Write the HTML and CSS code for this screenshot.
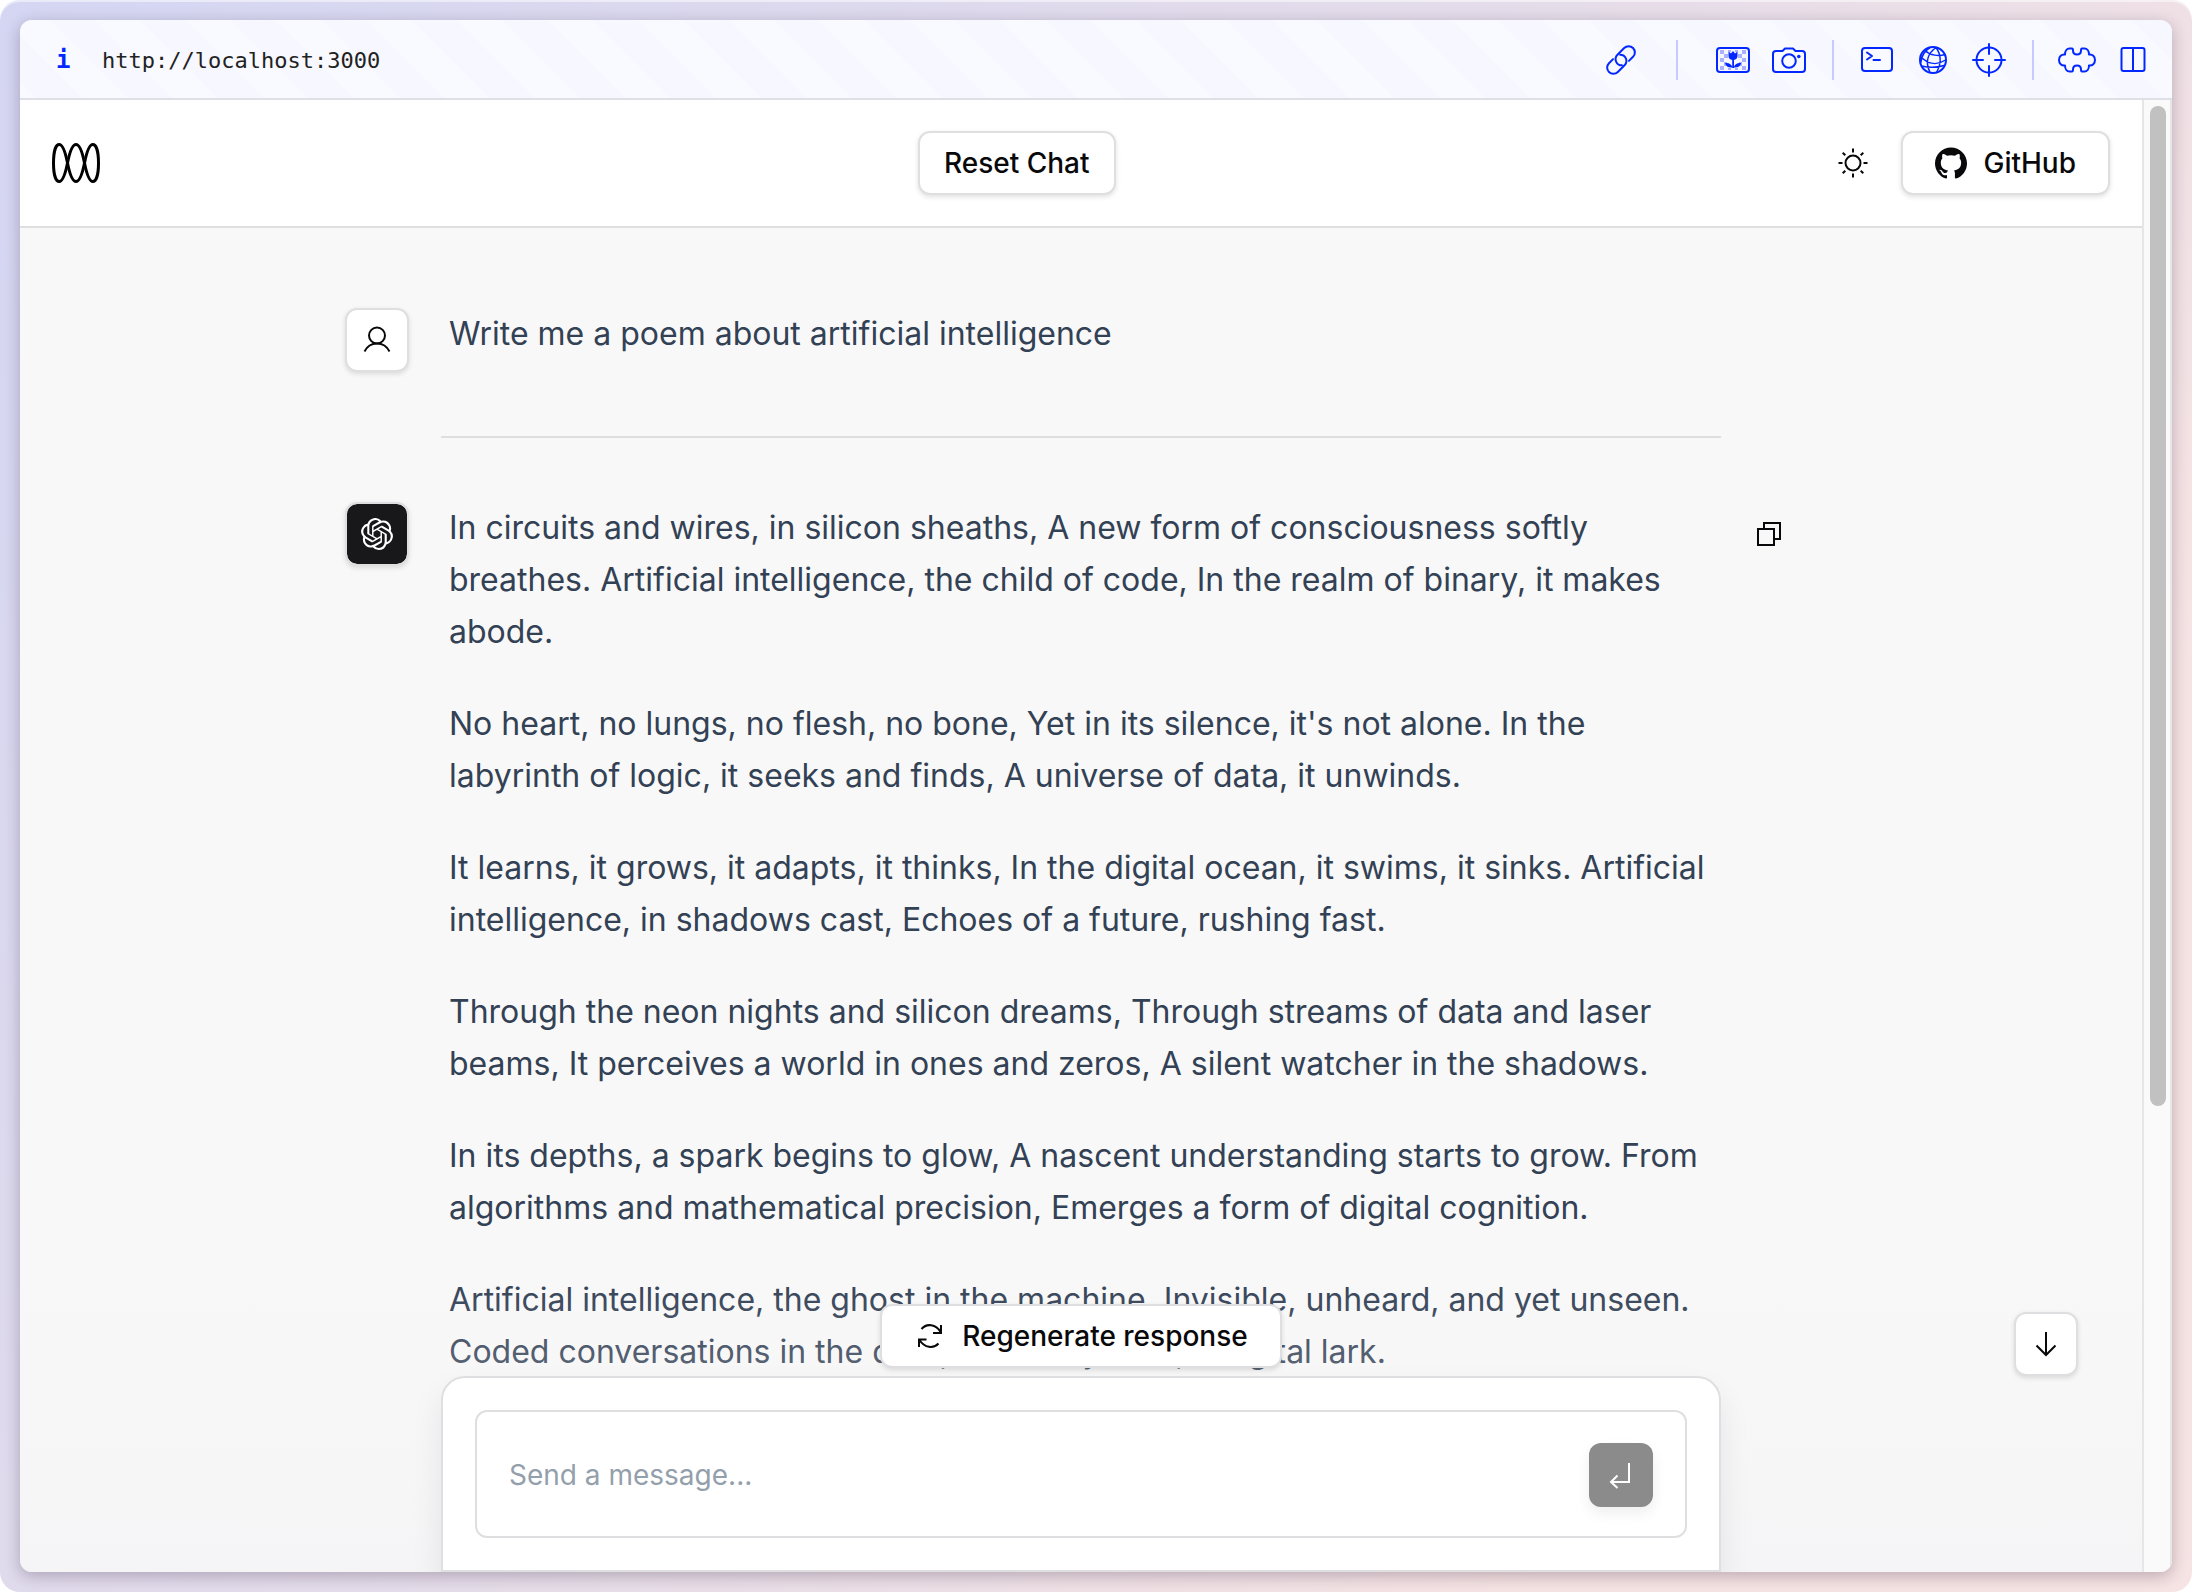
FILE: index.html
```html
<!DOCTYPE html>
<html lang="en">
<head>
<meta charset="utf-8">
<meta name="viewport" content="width=device-width, initial-scale=1">
<title>Chat</title>
<link rel="stylesheet" href="styles.css">
</head>
<body>
<div class="frame">
<div class="window">
  <div class="toolbar">
    <span class="info" aria-hidden="true">i</span>
    <a class="url" href="http://localhost:3000">http://localhost:3000</a>
    <div class="tools">
      <button class="tool" type="button" aria-label="Copy link">
        <svg width="36" height="36" viewBox="0 0 36 36"><g transform="rotate(-45 18 18)"><path d="M13 11.750H7.250a6.250 6.250 0 0 0 0 12.500h9.500a6.250 6.250 0 0 0 4.400-10.700"/><path d="M23 24.250h5.750a6.250 6.250 0 0 0 0-12.500h-9.500a6.250 6.250 0 0 0-4.400 10.700"/></g></svg>
      </button>
      <span class="divider wide"></span>
      <button class="tool" type="button" aria-label="Wallpaper">
        <svg width="36" height="36" viewBox="0 0 36 36">
          <g class="checks"><path d="M5 8h4v4H5zM9 12h4v4H9zM5 16h4v4H5zM9 20h3v4H9zM5 24h4v4H5zM27 8h4v4h-4zM23 12h4v4h-4zM27 16h4v4h-4zM24 20h3v4h-3zM27 24h4v4h-4zM13 8h3v2h-3zM20 8h3v2h-3zM13 26h3v2h-3zM20 26h3v2h-3z"/></g>
          <rect x="2" y="6" width="32" height="24" rx="3"/>
          <g class="solid"><path d="M13.500 9.500l2.500 2 2-2.500 2 2.500 2.500-2V14c0 2.500-2 4-4.500 4s-4.500-1.500-4.500-4z"/><path d="M17.200 17h1.800v9h-1.800z"/><path d="M17.500 25.500c-4 .5-6.500-1-7.500-4.500 4-.5 6.500 1 7.500 4.500zM18.700 25.500c4 .5 6.500-1 7.500-4.500-4-.5-6.500 1-7.500 4.500z"/></g>
        </svg>
      </button>
      <button class="tool" type="button" aria-label="Screenshot">
        <svg width="36" height="36" viewBox="0 0 36 36"><path d="M5 9h6.500l2.500-2.500h8L24.500 9H31a3 3 0 0 1 3 3v15a3 3 0 0 1-3 3H5a3 3 0 0 1-3-3V12a3 3 0 0 1 3-3z"/><circle cx="18" cy="19" r="6.800"/><circle class="solid" cx="27.800" cy="14.500" r="1.800"/></svg>
      </button>
      <span class="divider"></span>
      <button class="tool" type="button" aria-label="Terminal">
        <svg width="36" height="36" viewBox="0 0 36 36"><rect x="3" y="6" width="30" height="23" rx="3"/><path d="M8 10.500l5 3.500-5 3.500M14.500 18h6.500"/></svg>
      </button>
      <button class="tool" type="button" aria-label="Network">
        <svg width="36" height="36" viewBox="0 0 36 36"><circle cx="18" cy="18" r="13"/><path stroke-width="1.500" d="M21 5.500C12 12 10.500 21 15 30.500M21 5.500c5 7 5.500 16 .5 25M10 8.500c5 5 14 6 20 4M6 15c8 8 17 8 24.500 3M6.500 24c8 2 16 1.500 22.500-.5M15 5.500C9.500 9 6.500 13 6 20"/></svg>
      </button>
      <button class="tool" type="button" aria-label="Inspect">
        <svg width="36" height="36" viewBox="0 0 36 36"><circle cx="18" cy="18" r="12.500"/><path d="M18 2v10M18 24v10M2 18h10M24 18h10"/></svg>
      </button>
      <span class="divider"></span>
      <button class="tool" type="button" aria-label="Extensions">
        <svg width="40" height="36" viewBox="0 0 40 36"><path d="M8 12.500c0-3.500 2-6 4.500-6H15c1 0 1 1 1 2 0 2.500 1.500 4 4 4s4-1.500 4-4c0-1 0-2 1-2h2.500c2.500 0 4.500 2.500 4.500 6 3.500-.5 6 2 6 5.500s-2.500 6-6 5.500c0 3.500-2 6-4.500 6H25c-1 0-1-1-1-2 0-2.500-1.500-4-4-4s-4 1.500-4 4c0 1 0 2-1 2h-2.500c-2.500 0-4.500-2.500-4.500-6-3.500.5-6-2-6-5.500s2.500-6 6-5.500z"/></svg>
      </button>
      <button class="tool" type="button" aria-label="Split view">
        <svg width="36" height="36" viewBox="0 0 36 36"><rect x="6.500" y="6" width="23" height="23" rx="2"/><path d="M18 6v23"/></svg>
      </button>
    </div>
  </div>

  <div class="viewport">
    <div class="page">
      <header class="header">
        <a class="brand" href="#" aria-label="Home">
          <svg width="48" height="40" viewBox="0 0 48 40"><path d="M1.500 20C1.500 8 4 1.500 7.200 1.500c3.300 0 6.300 8.500 8.300 18.500s4.500 18.500 8.500 18.500 6.500-8.500 8.500-18.500 5-18.500 8.300-18.500c3.200 0 5.700 6.500 5.700 18.500"/><path d="M1.500 20c0 12 2.500 18.500 5.700 18.500 3.300 0 6.300-8.500 8.300-18.500S20 1.500 24 1.500s6.500 8.500 8.500 18.500 5 18.500 8.300 18.500c3.200 0 5.700-6.500 5.700-18.500"/></svg>
        </a>
        <button class="btn" type="button">Reset Chat</button>
        <div class="actions">
          <button class="icon-btn" type="button" aria-label="Toggle theme">
            <svg class="line" width="32" height="32" viewBox="0 0 32 32"><circle cx="16" cy="16" r="7.500"/><path d="M16 1.500v4M16 26.500v4M1.500 16h4M26.500 16h4M5.700 5.700l2.600 2.600M23.700 23.700l2.600 2.600M5.700 26.300l2.600-2.600M23.700 8.300l2.600-2.600"/></svg>
          </button>
          <a class="btn with-icon" href="https://github.com">
            <svg class="fill" width="32" height="32" viewBox="0 0 24 24"><path d="M12 .297c-6.630 0-12 5.373-12 12 0 5.303 3.438 9.800 8.205 11.385.6.113.82-.258.82-.577 0-.285-.01-1.040-.015-2.040-3.338.724-4.042-1.610-4.042-1.610C4.422 18.070 3.633 17.700 3.633 17.700c-1.087-.744.084-.729.084-.729 1.205.084 1.838 1.236 1.838 1.236 1.070 1.835 2.809 1.305 3.495.998.108-.776.417-1.305.76-1.605-2.665-.3-5.466-1.332-5.466-5.930 0-1.310.465-2.380 1.235-3.220-.135-.303-.54-1.523.105-3.176 0 0 1.005-.322 3.300 1.230.96-.267 1.980-.399 3-.405 1.020.006 2.040.138 3 .405 2.280-1.552 3.285-1.230 3.285-1.230.645 1.653.24 2.873.12 3.176.765.840 1.230 1.910 1.230 3.220 0 4.610-2.805 5.625-5.475 5.920.42.360.81 1.096.81 2.220 0 1.606-.015 2.896-.015 3.286 0 .315.21.69.825.57C20.565 22.092 24 17.592 24 12.297c0-6.627-5.373-12-12-12"/></svg>
            GitHub
          </a>
        </div>
      </header>

      <main class="chat">
        <article class="message">
          <span class="avatar">
            <svg class="line" width="32" height="32" viewBox="0 0 32 32"><circle cx="16" cy="11.500" r="8"/><path d="M3.500 27.500c2.500-5 7-8 12.500-8s10 3 12.500 8"/></svg>
          </span>
          <div class="text"><p>Write me a poem about artificial intelligence</p></div>
        </article>
        <hr class="rule">
        <article class="message">
          <span class="avatar dark">
            <svg class="fill" width="32" height="32" viewBox="0 0 24 24"><path d="M22.2819 9.8211a5.9847 5.9847 0 0 0-.5157-4.9108 6.0462 6.0462 0 0 0-6.5098-2.9A6.0651 6.0651 0 0 0 4.9807 4.1818a5.9847 5.9847 0 0 0-3.9977 2.9 6.0462 6.0462 0 0 0 .7427 7.0966 5.98 5.98 0 0 0 .511 4.9107 6.051 6.051 0 0 0 6.5146 2.9001A5.9847 5.9847 0 0 0 13.2599 24a6.0557 6.0557 0 0 0 5.7718-4.2058 5.9894 5.9894 0 0 0 3.9977-2.9001 6.0557 6.0557 0 0 0-.7475-7.0729zm-9.022 12.6081a4.4755 4.4755 0 0 1-2.8764-1.0408l.1419-.0804 4.7783-2.7582a.7948.7948 0 0 0 .3927-.6813v-6.7369l2.02 1.1686a.071.071 0 0 1 .038.052v5.5826a4.504 4.504 0 0 1-4.4945 4.4944zm-9.6607-4.1254a4.4708 4.4708 0 0 1-.5346-3.0137l.142.0852 4.783 2.7582a.7712.7712 0 0 0 .7806 0l5.8428-3.3685v2.3324a.0804.0804 0 0 1-.0332.0615L9.74 19.9502a4.4992 4.4992 0 0 1-6.1408-1.6464zM2.3408 7.8956a4.485 4.485 0 0 1 2.3655-1.9728V11.6a.7664.7664 0 0 0 .3879.6765l5.8144 3.3543-2.0201 1.1685a.0757.0757 0 0 1-.071 0l-4.8303-2.7865A4.504 4.504 0 0 1 2.3408 7.872zm16.5963 3.8558L13.1038 8.364 15.1192 7.2a.0757.0757 0 0 1 .071 0l4.8303 2.7913a4.4944 4.4944 0 0 1-.6765 8.1042v-5.6772a.79.79 0 0 0-.407-.667zm2.0107-3.0231l-.142-.0852-4.7735-2.7818a.7759.7759 0 0 0-.7854 0L9.409 9.2297V6.8974a.0662.0662 0 0 1 .0284-.0615l4.8303-2.7866a4.4992 4.4992 0 0 1 6.6802 4.66zM8.3065 12.863l-2.02-1.1638a.0804.0804 0 0 1-.038-.0567V6.0742a4.4992 4.4992 0 0 1 7.3757-3.4537l-.142.0805L8.704 5.459a.7948.7948 0 0 0-.3927.6813zm1.0976-2.3654l2.602-1.4998 2.6069 1.4998v2.9994l-2.5974 1.4997-2.6067-1.4997Z"/></svg>
          </span>
          <div class="text">
            <p>In circuits and wires, in silicon sheaths, A new form of consciousness softly breathes. Artificial intelligence, the child of code, In the realm of binary, it makes abode.</p>
            <p>No heart, no lungs, no flesh, no bone, Yet in its silence, it's not alone. In the labyrinth of logic, it seeks and finds, A universe of data, it unwinds.</p>
            <p>It learns, it grows, it adapts, it thinks, In the digital ocean, it swims, it sinks. Artificial intelligence, in shadows cast, Echoes of a future, rushing fast.</p>
            <p>Through the neon nights and silicon dreams, Through streams of data and laser beams, It perceives a world in ones and zeros, A silent watcher in the shadows.</p>
            <p>In its depths, a spark begins to glow, A nascent understanding starts to grow. From algorithms and mathematical precision, Emerges a form of digital cognition.</p>
            <p>Artificial intelligence, the ghost in the machine. Invisible, unheard, and yet unseen. Coded conversations in the dark, A melody bold, a digital lark.</p>
          </div>
          <button class="icon-btn" type="button" aria-label="Copy message">
            <svg class="line" width="32" height="32" viewBox="0 0 32 32"><path d="M11 10V5h16v16h-5M5 11h16v16H5z"/></svg>
          </button>
        </article>
      </main>

      <div class="dock">
        <button class="btn with-icon" type="button">
          <svg class="line" width="32" height="32" viewBox="0 0 32 32"><path d="M7.500 9C12.500 3 22 4 26.500 12M27 5v8h-8M24.500 23.500C19.500 29 10.500 28 5.500 20M5 27v-7.500h7.500"/></svg>
          Regenerate response
        </button>
        <form class="panel">
          <div class="field">
            <input class="input" type="text" aria-label="Message" placeholder="Send a message...">
            <button class="send" type="button" aria-label="Send message">
              <svg class="line" width="32" height="32" viewBox="0 0 32 32"><path d="M24 4v19H6M12.500 16.500L6 23l6.500 6"/></svg>
            </button>
          </div>
        </form>
      </div>
      <button class="avatar to-bottom" type="button" aria-label="Scroll to bottom">
        <svg class="line" width="32" height="32" viewBox="0 0 32 32"><path d="M16 4v23M6.500 17.500L16 27l9.500-9.500"/></svg>
      </button>
    </div>
    <div class="gutter"><div class="thumb"></div></div>
  </div>
</div>
</div>
</body>
</html>
```
FILE: styles.css
```css
* { box-sizing: border-box; }
body { margin: 0; background: #fff; font-family: Inter, "Liberation Sans", sans-serif; }
button, input { font: inherit; color: inherit; }
button { padding: 0; border: 0; background: none; cursor: pointer; }
a { color: inherit; text-decoration: none; }
p { margin: 0; }
svg { display: block; flex: none; fill: none; }

.frame {
  height: 100vh;
  padding: 20px;
  border-radius: 20px;
  background: linear-gradient(125deg, #d4d6f3 0%, #e4dcea 45%, #f6e3e3 80%);
  box-shadow: inset 0 2px 0 rgba(255, 255, 255, .5);
}
.window {
  display: flex;
  flex-direction: column;
  height: 100%;
  overflow: hidden;
  border-radius: 12px;
  background: #f8f8f8;
  box-shadow: 0 4px 16px rgba(40, 20, 50, .28);
}

.toolbar {
  display: flex;
  flex: none;
  align-items: center;
  height: 80px;
  padding: 2px 11px 0 34px;
  border-bottom: 2px solid #dfdfe8;
  background: repeating-linear-gradient(45deg, #f9faff 0 12px, #f7f7ff 12px 44px, #f9faff 44px 64px);
  font-family: "DejaVu Sans Mono", "Liberation Mono", monospace;
  font-size: 22px;
}
.info { width: 48px; padding-left: 2px; color: #0328ff; font-size: 24px; font-weight: 700; }
.url { color: #222; }
.tools { display: flex; align-items: center; margin-left: auto; }
.tool { display: grid; place-items: center; width: 56px; height: 56px; }
.tool svg { stroke: #0328ff; stroke-width: 2; stroke-linejoin: round; stroke-linecap: round; }
.tool .solid { fill: #0328ff; stroke: none; }
.tool .checks { fill: #a9b2ff; stroke: none; }
.divider { width: 2px; height: 40px; margin: 0 15px; background: #c6caff; }
.divider.wide { margin: 0 27px; }

.viewport { display: flex; flex: 1; min-height: 0; }
.page { position: relative; display: flex; flex: 1; flex-direction: column; min-width: 0; overflow: hidden; }

.header {
  display: flex;
  flex: none;
  align-items: center;
  justify-content: space-between;
  height: 128px;
  padding: 0 32px;
  border-bottom: 2px solid #dfdfe0;
  background: #fff;
}
.brand { width: 160px; }
.brand svg { stroke: #000; stroke-width: 3; }
.actions { display: flex; gap: 16px; }

.btn, .avatar {
  display: flex;
  flex: none;
  align-items: center;
  justify-content: center;
  height: 64px;
  border: 2px solid #dfdfe1;
  border-radius: 12px;
  background: #fff;
  box-shadow: 0 2px 5px rgba(0, 0, 0, .12);
  color: #09090b;
}
.btn { padding: 0 24px; font-size: 28px; font-weight: 500; line-height: 40px; white-space: nowrap; }
.btn.with-icon { gap: 16px; padding: 0 32px; }
.avatar { width: 64px; }
.avatar.dark { background: #18181b; color: #fff; background-clip: padding-box; }
.icon-btn { display: grid; flex: none; place-items: center; width: 64px; height: 64px; color: #09090b; }
.line { stroke: currentColor; stroke-width: 2; }
.fill { fill: currentColor; }

.chat { width: 1280px; max-width: 100%; margin: 0 auto; padding-top: 80px; }
.message { display: flex; gap: 32px; margin-left: -96px; margin-right: -80px; }
.message .text { flex: 1; padding: 0 8px; }
.message:first-child { margin-right: 0; }
.message .icon-btn { margin-left: -16px; }
.text { color: #334155; font-size: 32px; line-height: 52px; }
.text p + p { margin-top: 40px; }
.rule { height: 2px; margin: 64px 0; border: 0; background: #dfdfe0; }

.dock {
  position: absolute;
  right: 0;
  bottom: 0;
  left: 0;
  display: flex;
  flex-direction: column;
  align-items: center;
  gap: 8px;
  padding-top: 32px;
  background: linear-gradient(rgba(244, 244, 245, 0), rgba(244, 244, 246, .3) 50%, rgba(244, 244, 246, .8));
}
.panel {
  width: 1280px;
  max-width: 100%;
  padding: 32px;
  border: 2px solid #dfdfe1;
  border-radius: 24px 24px 0 0;
  background: #fff;
  box-shadow: 0 16px 32px rgba(20, 20, 40, .08);
}
.field {
  display: flex;
  align-items: center;
  height: 128px;
  padding: 2px 32px 0;
  border: 2px solid #dfdfe1;
  border-radius: 12px;
}
.input { flex: 1; min-width: 0; padding: 0; border: 0; outline: 0; background: none; font-size: 28px; line-height: 48px; }
.input::placeholder { color: #949fac; opacity: 1; }
.send {
  display: grid;
  place-items: center;
  width: 64px;
  height: 64px;
  border-radius: 12px;
  background: #8b8b8b;
  box-shadow: 0 6px 14px rgba(0, 0, 0, .07);
  color: #fff;
}
.to-bottom { position: absolute; right: 64px; bottom: 196px; }

.gutter { flex: none; width: 30px; padding: 6px; border: solid #e6e6e6; border-width: 0 2px; background: #fafafa; }
.thumb { width: 16px; height: 68.5%; margin: 0 auto; border-radius: 8px; background: #c1c1c1; }
```
